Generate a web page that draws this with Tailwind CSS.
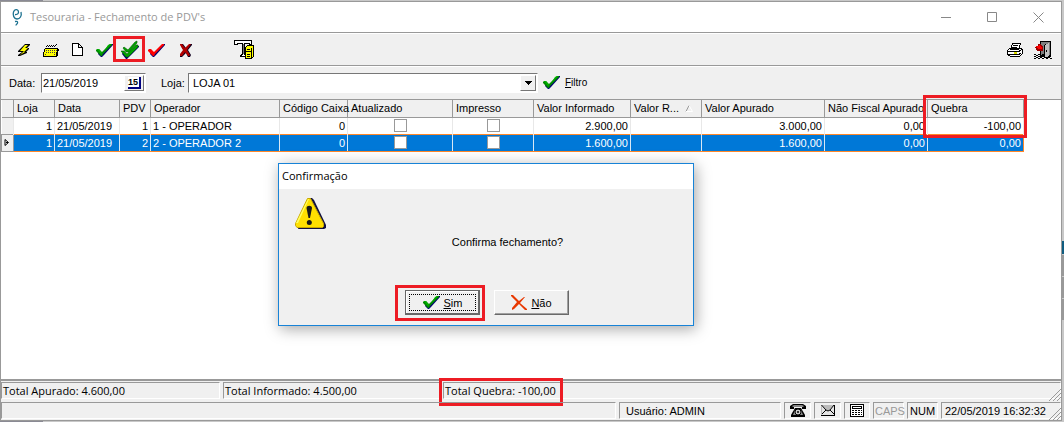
<!DOCTYPE html>
<html lang="pt-BR">
<head>
<meta charset="utf-8">
<meta name="viewport" content="width=device-width, initial-scale=1">
<title>Tesouraria - Fechamento de PDV's</title>
<script src="https://cdn.jsdelivr.net/npm/@tailwindcss/browser@4"></script>
</head>
<body class="h-screen overflow-hidden bg-[#c8c8c8] font-['Liberation_Sans',Arial,sans-serif] text-[11px] leading-4 text-black">
<svg class="hidden" aria-hidden="true">
  <symbol id="check" viewBox="0 0 17 15">
    <path fill="#000070" d="M3 8l3 2 9-9h2v1L8 12l-2 2H5L2 11z"/>
    <path fill="#008a00" d="M0 7l1-1h2l3 3 8-8h2v1L7 11l-1 2H5L0 8z"/>
    <path fill="#00b400" d="M1 6h2l3 4-1 1zM12 2l2-1h1l-7 7z"/>
  </symbol>
</svg>
<div class="flex h-full flex-col">
<div class="h-px w-[43px] shrink-0 bg-[#8a8a94]"></div>
<div class="flex min-h-0 flex-1">
<main class="relative flex min-h-0 flex-1 flex-col border border-[#999] bg-[#f0f0f0]">

  <header class="flex h-[30px] shrink-0 items-center bg-white pl-2.5 text-[#999]">
    <svg class="h-[18px] w-3" viewBox="0 0 12 18" fill="none" stroke="#1b7190" stroke-width="1.3"><path d="M4 6.500c3 .3 4-1.500 3.300-3.500S3.500 1 2.500 4s.5 7 3.500 7 5-3 4-7M4 13.500c2-.5 3 0 2.500 1.500S5 16 5 17.500"/></svg>
    <h1 class="ml-[7px] flex-1 font-['Open_Sans',sans-serif]">Tesouraria - Fechamento de PDV's</h1>
    <button type="button" aria-label="Minimizar" class="flex h-7 w-[46px] items-center justify-center"><svg class="size-[11px]" viewBox="0 0 11 11" stroke="#888"><path d="M0 5.5h10"/></svg></button>
    <button type="button" aria-label="Maximizar" class="flex h-7 w-[46px] items-center justify-center"><svg class="size-[11px]" viewBox="0 0 11 11" fill="none" stroke="#888"><path d="M.5.5h9v9h-9z"/></svg></button>
    <button type="button" aria-label="Fechar" class="flex h-7 w-[46px] items-center justify-center"><svg class="size-[11px]" viewBox="0 0 11 11" stroke="#888"><path d="M.5.5l10 10m0-10l-10 10"/></svg></button>
  </header>

  <nav aria-label="Ferramentas" class="flex h-[34px] shrink-0 items-center border-y border-[#999] pt-0.5 pr-1 pl-[9px] shadow-[inset_0_1px_white]">
    <button type="button" aria-label="Atualizar" class="flex h-7 w-[27px] items-center justify-center">
      <svg class="size-[14px]" viewBox="0 0 14 14"><path fill="#000" d="M8 1h5v1l-3 3h2v1L9 9h1v1l-7 3H1v-1l4-3H1V8z"/><path fill="#ff0" d="M8 2h3L8 5h3L7 9h1l-5 3 4-4H3z"/></svg></button>
    <button type="button" aria-label="Teclado" class="flex h-7 w-[27px] items-center justify-center">
      <svg class="h-[15px] w-4" viewBox="0 0 16 15" shape-rendering="crispEdges"><path fill="none" stroke="#000" stroke-dasharray="1 1" d="M3 3.500h9M4 2.500h10M13 1.500h2"/><path d="M2 5h13v1h1v2h-1v5h-1v1H0v-5h1V6h1z"/><path fill="#ff0" d="M2 6h12v3h-1v4H1V9h1z"/><path fill="none" stroke="#444" stroke-dasharray="1 1" d="M3 7.500h11M3 9.500h10M2 11.500h2m7 0h2"/></svg></button>
    <button type="button" aria-label="Novo" class="flex h-7 w-[27px] items-center justify-center">
      <svg class="h-[14px] w-[11px]" viewBox="0 0 11 14" fill="#fff" stroke="#000" shape-rendering="crispEdges"><path d="M.5.5h6l4 4v8H.5zM6.500.5v4h4"/></svg></button>
    <button type="button" aria-label="Confirmar" class="flex h-7 w-[27px] items-center justify-center"><svg class="h-[15px] w-[17px]"><use href="#check"/></svg></button>
    <button type="button" aria-label="Confirmar todos" class="relative flex h-7 w-6 items-center justify-center">
      <svg class="h-5 w-[18px]" viewBox="0 0 18 20"><path fill="#000070" d="M2 12l4 3L16 6h2v1L8 17l-2 2H5l-4-5z"/><path fill="#00a000" stroke="#006000" stroke-width=".6" d="M2 8l1-1 4 3 7-8 2-1v2L8 12H5z"/><path fill="#00a000" stroke="#006000" stroke-width=".6" d="M0 11h3l3 3 9-9h2v2L7 17H5z"/></svg>
      <span class="pointer-events-none absolute top-0 -left-[5px] h-[26px] w-8 border-3 border-[#ed1c24]"></span></button>
    <button type="button" aria-label="Reabrir" class="ml-px flex h-7 w-[27px] items-center justify-center"><svg class="h-[15px] w-[17px]" viewBox="0 0 17 15"><path fill="#000070" d="M3 8l3 2 9-9h2v1L8 12l-2 2H5L2 11z"/><path fill="#f00" d="M0 7l1-1h2l3 3 8-8h2v1L7 11l-1 2H5L0 8z"/></svg></button>
    <button type="button" aria-label="Cancelar" class="ml-0.5 flex h-7 w-[27px] items-center justify-center"><svg class="size-[14px]" viewBox="0 0 14 14"><path fill="#100020" d="M2 1h2l3 4 4-4h2v1L9 7l3 5-1 2H9l-2-4-4 4H1v-2l4-4-3-5z"/><path fill="#b00000" d="M1 1h2l3 4 4-4h2L8 7l3 5-1 1H9L6 9l-3 4H1v-2l3-4-3-5z"/></svg></button>
    <button type="button" aria-label="Totais" class="ml-[30px] flex h-7 w-[30px] items-center justify-center">
      <svg class="size-5" viewBox="0 0 20 20" shape-rendering="crispEdges"><path fill="#fff" stroke="#000" d="M.5.5h17v4h-1l-2-1h-4v11l2 1v1h-6v-1l2-1v-11h-4l-2 1h-2z"/><path fill="#777" d="M9 4h1v10H9z"/><path fill="#ff0" stroke="#000" d="M11.500 7.500l2-2h6v11l-2 2h-6z"/><path fill="none" stroke="#000" d="M11 11.500h7M13 9.500h3m-3 5h3m-3 2h3M17.500 8v10"/></svg></button>
    <button type="button" aria-label="Imprimir" class="ml-auto flex h-7 w-7 items-center justify-center">
      <svg class="size-4" viewBox="0 0 16 16" shape-rendering="crispEdges"><path fill="#fff" stroke="#000" d="M2.500 6.500h11l2 1v4l-3 3h-9l-3-2v-4zM5.500 1.500h8l-2 6h-8z"/><path fill="none" stroke="#000" d="M6 3.500h5m-6 2h5m-9 4h10l3-1m-13 4h10l3-1"/><path fill="#dd0" d="M7 10h3v2H7z"/></svg></button>
    <button type="button" aria-label="Sair" class="flex h-7 w-7 items-center justify-center">
      <svg class="h-[19px] w-[18px]" viewBox="0 0 18 19" shape-rendering="crispEdges"><path d="M6 0h11v16H6z"/><path fill="#808080" d="M7 1h9v13H7z"/><path fill="#000" d="M10 4l5-2v14l-3 2-2-2z"/><path fill="#c0c0c0" d="M11 4l4-2v13l-4 2z"/><path fill="#000" d="M12 9h1v2h-1z"/><path fill="#900" d="M1 6h3V3h2l3 3v4H3z"/><path fill="#f00" d="M2 5h3V3l3 4v1H4z"/><path stroke="#000" stroke-dasharray="2 2" d="M0 13.500h10M2 14.500h8M0 15.500h10M2 16.500h15M0 17.500h18"/></svg></button>
  </nav>

  <form class="flex h-[33px] shrink-0 items-center pl-2 shadow-[inset_0_1px_white]">
    <label for="data" class="w-8">Data:</label>
    <div class="flex h-5 w-[105px] border border-t-[#777] border-r-white border-b-white border-l-[#777] bg-white p-px">
      <input id="data" type="text" value="21/05/2019" class="min-w-0 flex-1 bg-white outline-none">
      <button type="button" aria-label="Abrir calendário" class="flex w-5 items-center justify-center border border-t-white border-r-[#777] border-b-[#777] border-l-white bg-[#f0f0f0]"><span class="h-3 w-[13px] border-r-2 border-b-2 border-[#000080] bg-white text-center text-[9px] leading-[10px] font-bold">15</span></button>
    </div>
    <label for="loja" class="ml-[15px] w-[27px]">Loja:</label>
    <div class="relative h-5 w-[350px] border border-t-[#777] border-r-white border-b-white border-l-[#777] bg-white p-px">
      <select id="loja" class="block h-full w-full appearance-none bg-white pl-[3px] outline-none"><option>LOJA 01</option></select>
      <span class="pointer-events-none absolute top-px right-px flex h-4 w-4 items-center justify-center border border-t-white border-r-[#777] border-b-[#777] border-l-white bg-[#f0f0f0]"><svg class="h-1 w-[7px]" viewBox="0 0 7 4" shape-rendering="crispEdges"><path d="M0 0h7L3.500 4z"/></svg></span>
    </div>
    <button type="button" class="ml-[5px] flex items-center gap-[5px] text-[10px]"><svg class="h-[15px] w-[17px]"><use href="#check"/></svg><span><u>F</u>iltro</span></button>
  </form>

  <section class="min-h-0 flex-1 border-t border-b-2 border-[#999] bg-white">
    <table class="w-[1022px] table-fixed border-collapse whitespace-nowrap">
      <colgroup><col class="w-3"><col class="w-[41px]"><col class="w-[65px]"><col class="w-[31px]"><col class="w-[129px]"><col class="w-[68px]"><col class="w-[105px]"><col class="w-[81px]"><col class="w-[97px]"><col class="w-[71px]"><col class="w-[123px]"><col class="w-[103px]"><col class="w-24"></colgroup>
      <thead>
        <tr class="h-[17px] bg-[#f0f0f0] text-left *:border-r *:border-b *:border-[#999] *:p-0 *:pl-[3px] *:font-normal">
          <td></td><th>Loja</th><th>Data</th><th>PDV</th><th>Operador</th><th>Código Caixa</th><th>Atualizado</th><th>Impresso</th><th>Valor Informado</th>
          <th><span class="flex items-center justify-between pr-2">Valor R... <svg class="h-[7px] w-2" viewBox="0 0 8 7" fill="none" stroke="#999"><path d="M1 6.500L4 .5"/><path stroke="#fff" d="M4 .5l3.500 6H1"/></svg></span></th>
          <th>Valor Apurado</th><th>Não Fiscal Apurado</th>
          <th class="relative">Quebra<span class="pointer-events-none absolute -top-[5px] -left-[5px] h-[43px] w-[104px] border-3 border-[#ed1c24]"></span></th>
        </tr>
      </thead>
      <tbody>
        <tr class="h-[17px] text-right *:border-r *:border-[#e8e8e8] *:p-0 *:px-[2px]">
          <td class="bg-[#f0f0f0]"></td><td>1</td><td class="text-left">21/05/2019</td><td>1</td><td class="text-left">1 - OPERADOR</td><td>0</td>
          <td><input type="checkbox" aria-label="Atualizado, PDV 1" class="mx-auto block size-[13px] appearance-none border border-[#999] bg-white"></td>
          <td><input type="checkbox" aria-label="Impresso, PDV 1" class="mx-auto block size-[13px] appearance-none border border-[#999] bg-white"></td>
          <td>2.900,00</td><td></td><td>3.000,00</td><td>0,00</td><td>-100,00</td>
        </tr>
        <tr class="h-[17px] bg-[#0078d7] text-right text-white *:border *:border-x-[#d8e8f5] *:border-y-[#ff8728] *:p-0 *:px-[2px]">
          <td class="border-[#999]! bg-[#f0f0f0]"><svg class="h-[7px] w-[6px]" viewBox="0 0 6 7" fill="none" stroke="#000"><path d="M1 .5l3.500 3L1 6.500zM2 3.500h2"/></svg></td><td>1</td><td class="text-left">21/05/2019</td><td>2</td><td class="text-left">2 - OPERADOR 2</td><td>0</td>
          <td><input type="checkbox" aria-label="Atualizado, PDV 2" class="mx-auto block size-[13px] appearance-none border border-[#999] bg-white"></td>
          <td><input type="checkbox" aria-label="Impresso, PDV 2" class="mx-auto block size-[13px] appearance-none border border-[#999] bg-white"></td>
          <td>1.600,00</td><td></td><td>1.600,00</td><td>0,00</td><td class="border-r-[#ff8728]!">0,00</td>
        </tr>
      </tbody>
    </table>
  </section>

  <div class="relative flex h-5 shrink-0 gap-[3px] pt-px pb-[2px] font-['Open_Sans',sans-serif] *:border *:border-t-[#999] *:border-r-white *:border-b-white *:border-l-[#999]">
    <p class="w-[219px] pl-px">Total Apurado: 4.600,00</p>
    <p class="w-[217px] pl-px">Total Informado: 4.500,00</p>
    <p class="relative flex-1 pl-px">Total Quebra: -100,00<span class="pointer-events-none absolute -top-[5px] -left-[5px] h-7 w-[124px] border-3 border-[#ed1c24]"></span></p>
    <svg class="absolute right-0 bottom-0 size-3 border-0!" viewBox="0 0 12 12" stroke="#999"><path d="M0 12L12 0M4 12l8-8M8 12l4-4"/></svg>
  </div>

  <footer class="relative flex h-[19px] shrink-0 gap-[3px] pt-px pb-px *:border *:border-t-[#999] *:border-r-white *:border-b-white *:border-l-[#999]">
    <p class="flex-1"></p>
    <p class="w-[162px] pl-1.5">Usuário: ADMIN</p>
    <p class="flex w-[27px] items-center justify-center"><svg class="h-[13px] w-4" viewBox="0 0 16 13"><path d="M0 4V2l3-2h10l3 2v3h-4V3H4v2H0z"/><path d="M5 4h6l4 7v2H1v-2z"/><path fill="#888" d="M2 2l2-1h8l2 1-1 1H3zM5 6h6l2 5H3z"/><circle cx="8" cy="8" r="3" fill="#ccc" stroke="#000"/><circle cx="8" cy="8" r="1"/></svg></p>
    <p class="flex w-[27px] items-center justify-center"><svg class="h-[11px] w-[14px]" viewBox="0 0 14 11"><path fill="#bbb" d="M0 0h14v11H0z"/><path fill="#fff" d="M1 0l6 6 6-6v10H1z" opacity=".6"/><path fill="none" stroke="#000" d="M.5 0l4.500 5-4 4M13 0L9 5l4 4M5 5l2 1 2-1M0 10.500h14M13.500 0v11"/></svg></p>
    <p class="flex w-[26px] items-center justify-center"><svg class="h-[13px] w-[15px]" viewBox="0 0 15 13" shape-rendering="crispEdges"><path fill="#fff" stroke="#000" d="M.5.500h13v12H.5zM2.500 2.500h9v2h-9z"/><path stroke="#000" stroke-dasharray="2 1" d="M2 6.500h10m-10 2h10m-10 2h10"/></svg></p>
    <p class="w-[31px] pl-px text-[#999]">CAPS</p>
    <p class="w-[31px] pl-[2px]">NUM</p>
    <p class="w-[120px] pl-[3px]">22/05/2019 16:32:32</p>
    <svg class="absolute right-0 bottom-0 size-3 border-0!" viewBox="0 0 12 12" stroke="#999"><path d="M0 12L12 0M4 12l8-8M8 12l4-4"/></svg>
  </footer>

  <div role="dialog" aria-labelledby="dlg-title" class="absolute top-[161px] left-[277px] h-[163px] w-[416px] border border-[#1883d7] bg-[#f0f0f0] shadow-[2px_3px_14px_rgba(0,0,0,0.35)]">
    <h2 id="dlg-title" class="h-[25px] bg-white pl-[3px] font-['Open_Sans',sans-serif] leading-6">Confirmação</h2>
    <div class="flex h-[98px] pt-2 pl-4">
      <svg class="h-8 w-[31px] shrink-0" viewBox="0 0 31 32"><path fill="#101040" d="M15 1h2l2 2 12 25v3l-2 1H3z"/><path fill="#ffe000" stroke="#c8a800" d="M12.500 1.500h3l13 25v3l-1 1H2l-1.500-2v-2z"/><path fill="#ffff60" d="M13 2h1L3 26H1z"/><path fill="#181818" d="M11.500 11c0-3 5.500-3 5.500 0l-2 10h-1.500z"/><circle cx="14.300" cy="25.500" r="2.500" fill="#181818"/></svg>
      <p class="flex-1 pt-[37px] pr-1 text-center">Confirma fechamento?</p>
    </div>
    <div class="flex gap-[14px] pt-[3px] pl-[126px]">
      <div class="relative">
        <button type="button" class="block h-[25px] w-[75px] border border-[#666] bg-[#f0f0f0] shadow-[inset_-1px_-1px_#696969,inset_1px_1px_white]"><span class="m-[3px] flex h-[17px] items-center justify-center gap-1 border border-dotted border-black"><svg class="h-[15px] w-[17px]"><use href="#check"/></svg><span><u>S</u>im</span></span></button>
        <span class="pointer-events-none absolute -top-[5px] -left-[10px] h-9 w-[90px] border-3 border-[#ed1c24]"></span>
      </div>
      <button type="button" class="flex h-[25px] w-[75px] items-center justify-center gap-1 border border-t-white border-r-[#696969] border-b-[#696969] border-l-white bg-[#f0f0f0] shadow-[inset_-1px_-1px_#a0a0a0]"><svg class="h-[15px] w-4" viewBox="0 0 16 15" fill="#e83800"><path d="M0 0h2l6 6 5-4h1L9 8l7 6v1h-2L8 9l-5 5-2 1v-2l5-6-6-6z"/></svg><span><u>N</u>ão</span></button>
    </div>
  </div>
</main>
<aside aria-hidden="true" class="flex w-[2px] flex-col gap-px bg-[#c8c8c8] pt-[240px]">
  <span class="h-[13px] bg-[#0f5c80]"></span><span class="h-[21px] bg-[#999]"></span><span class="h-[21px] bg-[#999]"></span><span class="h-[21px] bg-[#999]"></span>
</aside>
</div>
<div class="h-px w-[43px] shrink-0 bg-[#8a8a94]"></div>
</div>
</body>
</html>
